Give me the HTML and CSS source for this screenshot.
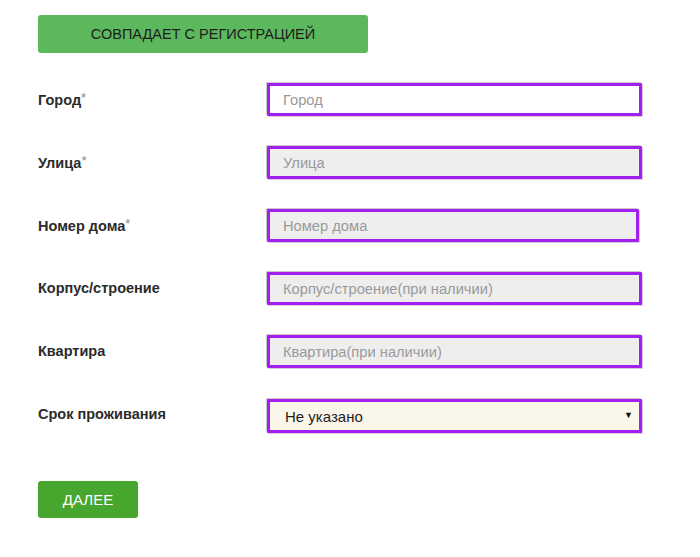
FILE: index.html
```html
<!DOCTYPE html>
<html lang="ru">
<head>
<meta charset="utf-8">
<link rel="stylesheet" href="styles.css">
</head>
<body>
<div class="page">
  <button class="btn-same" type="button">СОВПАДАЕТ С РЕГИСТРАЦИЕЙ</button>
  <form class="form">
    <label class="lbl">Город<span class="req">*</span></label>
    <input class="field field-white" type="text" placeholder="Город">
    <label class="lbl">Улица<span class="req">*</span></label>
    <input class="field" type="text" placeholder="Улица">
    <label class="lbl">Номер дома<span class="req">*</span></label>
    <input class="field field-short" type="text" placeholder="Номер дома">
    <label class="lbl">Корпус/строение</label>
    <input class="field" type="text" placeholder="Корпус/строение(при наличии)">
    <label class="lbl">Квартира</label>
    <input class="field" type="text" placeholder="Квартира(при наличии)">
    <label class="lbl">Срок проживания</label>
    <div class="select-wrap">
      <select class="field select">
        <option>Не указано</option>
      </select>
    </div>
  </form>
  <button class="btn-next" type="button">ДАЛЕЕ</button>
</div>
</body>
</html>
```
FILE: styles.css
```css
* { box-sizing: border-box; }
html, body { margin: 0; padding: 0; background: #fff; }
body { font-family: "Liberation Sans", Arial, sans-serif; color: #333; }
.page { padding: 15px 0 0 38px; display: flex; flex-direction: column; align-items: flex-start; }

.btn-same {
  width: 330px; height: 38px;
  background: #5cb85c; border: 0; border-radius: 3px;
  color: #1c1c1c; font-family: inherit; font-size: 14.5px;
  padding: 0;
}

.form {
  margin-top: 30px;
  display: grid;
  grid-template-columns: 229px 375px;
  row-gap: 30px;
  align-items: center;
}

.lbl {
  font-weight: bold; font-size: 14.5px; color: #2b2b2b;
  align-self: start; padding-top: 8px;
}
.req { font-weight: normal; font-size: 13px; color: #8a8a8a; vertical-align: 3px; line-height: 1; }

.field {
  width: 375px; height: 33px;
  border: 3px solid #a31ff0;
  box-shadow: -1px -1px 0 #c8c8c8, 1px 1px 0 #d8c8e0;
  background: #eeeeee;
  font-family: inherit; font-size: 14.7px; color: #222;
  padding: 0 0 0 13px;
  outline: none;
  border-radius: 1px;
}
.field::placeholder { color: #9a9a9a; }
.field-white { background: #fff; }
.field-short { width: 372px; }

.select-wrap { position: relative; width: 375px; margin-top: 1px; }
.select {
  -webkit-appearance: none; appearance: none;
  display: block; height: 34px;
  background: #fbf6ea; color: #1e1e1e;
  font-size: 15px; padding-left: 15px;
}
.select-wrap::after {
  content: "▼";
  position: absolute; right: 9px; top: 12px;
  font-size: 9px; line-height: 1; color: #111;
  pointer-events: none;
}

.btn-next {
  margin-top: 48px;
  width: 100px; height: 37px;
  background: #47a62e; border: 0; border-radius: 3px;
  color: #fff; font-family: inherit; font-size: 15px;
  padding: 0;
}
```
